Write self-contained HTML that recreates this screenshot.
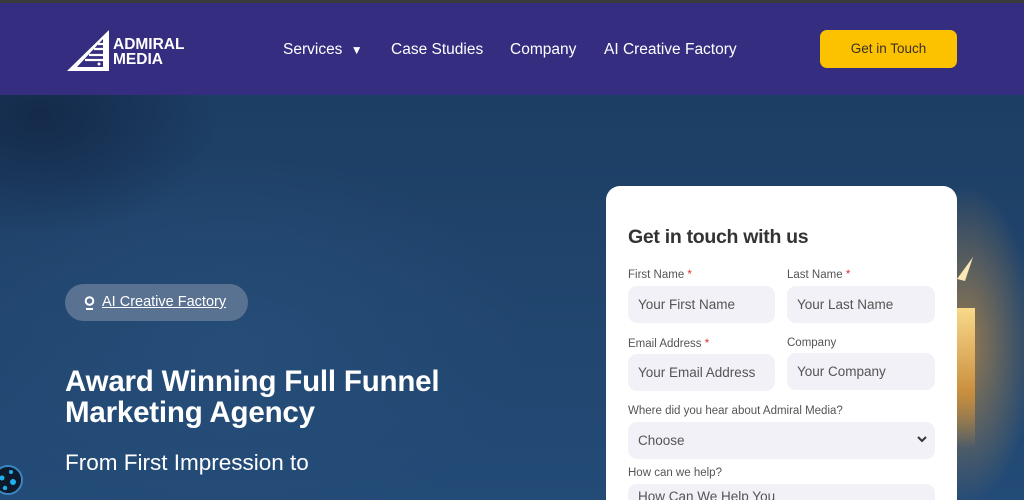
<!DOCTYPE html>
<html style="width:1024px;height:500px;overflow:hidden"><head><meta charset="utf-8"><style>
*{margin:0;padding:0;box-sizing:border-box}
body{width:1024px;height:500px;overflow:hidden;font-family:"Liberation Sans",sans-serif;background:#1f436b;position:relative}
.top{position:absolute;left:0;top:0;width:1024px;height:3px;background:#3a3a3a}
.nav{position:absolute;left:0;top:3px;width:1024px;height:92px;background:#342d80}
.hero{position:absolute;left:0;top:95px;width:1024px;height:405px;background:
radial-gradient(ellipse 180px 120px at 40px 20px,#142a4a 0%,rgba(20,42,74,0) 100%),
radial-gradient(ellipse 300px 200px at 230px 260px,#264d78 0%,rgba(38,77,120,0) 100%),
radial-gradient(ellipse 70px 160px at 965px 250px,rgba(190,140,70,.75) 0%,rgba(190,140,70,0) 100%),
linear-gradient(180deg,#1d3e64 0%,#21466f 60%,#234b77 100%)}
.navlink{position:absolute;top:38px;color:#fff;font-size:15.5px}
.btn{position:absolute;left:820px;top:27px;width:137px;height:38px;background:#fcc200;border-radius:7px;color:#3a2f2a;font-size:13.5px;text-align:center;line-height:38px}
.pill{position:absolute;left:65px;top:284px;width:183px;height:37px;border-radius:19px;background:#5a7291;color:#fff;font-size:14.5px;line-height:37px;padding-left:37px;text-decoration:underline}
h1{position:absolute;left:65px;top:366px;color:#fff;font-size:29.5px;line-height:31px;font-weight:bold;letter-spacing:-.2px}
.sub{position:absolute;left:65px;top:450px;color:#fff;font-size:22.5px}
.card{position:absolute;left:606px;top:186px;width:351px;height:314px;background:#fff;border-radius:14px 14px 0 0;overflow:hidden}
.card h2{position:absolute;left:22px;top:40px;font-size:19.5px;color:#333;font-weight:bold;letter-spacing:-.3px}
.lbl{position:absolute;font-size:11.5px;color:#555}
.lbl b{color:#d33;font-weight:normal}
.in{position:absolute;background:#f1f1f7;border-radius:9px;height:37px;font-size:13.5px;color:#555;line-height:37px;padding-left:10px}
.glow{position:absolute;left:957px;top:308px;width:18px;height:140px;background:linear-gradient(180deg,#f9d98a,#c98f3e 60%,rgba(150,110,70,0))}
</style></head><body>
<div class="top"></div>
<div class="nav">
<svg style="position:absolute;left:65px;top:24px" width="45" height="46" viewBox="0 0 45 46"><path d="M44 3 L44 44 L2 44 Z" fill="#fff"/><path d="M38 12 L38 40 L12 40 Z" fill="#342d80"/><path d="M20 33h18M24 28h14M29 22h9M33 17h5" stroke="#fff" stroke-width="2.2"/><circle cx="34" cy="37" r="1.5" fill="#fff"/></svg>
<div style="position:absolute;left:113px;top:34px;color:#fff;font-weight:bold;font-size:15.5px;line-height:15px">ADMIRAL<br>MEDIA</div>
<div class="navlink" style="left:283px">Services <span style="font-size:12px;margin-left:4px">▼</span></div>
<div class="navlink" style="left:391px">Case Studies</div>
<div class="navlink" style="left:510px">Company</div>
<div class="navlink" style="left:604px">AI Creative Factory</div>
<div class="btn">Get in Touch</div>
</div>
<div class="hero"></div>
<div class="glow"></div>
<svg style="position:absolute;left:955px;top:255px" width="20" height="30"><path d="M2 24 L18 2 L10 26 Z" fill="#fbe8b5"/></svg>
<div class="pill"><svg style="position:absolute;left:19px;top:12px" width="11" height="14"><circle cx="5.5" cy="5" r="3.8" fill="none" stroke="#fff" stroke-width="2"/><path d="M2 13h7" stroke="#fff" stroke-width="2"/></svg>AI Creative Factory</div>
<h1>Award Winning Full Funnel<br>Marketing Agency</h1>
<div class="sub">From First Impression to</div>
<svg style="position:absolute;left:-2px;top:462px" width="28" height="36"><circle cx="10" cy="18" r="14" fill="#0d1a2c" stroke="#3a86c0" stroke-width="2"/><circle cx="4" cy="16" r="2.5" fill="#1fb0f0"/><circle cx="13" cy="10" r="2" fill="#1fb0f0"/><circle cx="15" cy="20" r="3" fill="#1fb0f0"/><circle cx="7" cy="26" r="2.2" fill="#1fb0f0"/></svg>
<div class="card">
<h2>Get in touch with us</h2>
<div class="lbl" style="left:22px;top:83px">First Name <b>*</b></div>
<div class="lbl" style="left:181px;top:83px">Last Name <b>*</b></div>
<div class="in" style="left:22px;top:100px;width:147px">Your First Name</div>
<div class="in" style="left:181px;top:100px;width:148px">Your Last Name</div>
<div class="lbl" style="left:22px;top:152px">Email Address <b>*</b></div>
<div class="lbl" style="left:181px;top:151px">Company</div>
<div class="in" style="left:22px;top:168px;width:147px">Your Email Address</div>
<div class="in" style="left:181px;top:167px;width:148px">Your Company</div>
<div class="lbl" style="left:22px;top:219px">Where did you hear about Admiral Media?</div>
<div class="in" style="left:22px;top:236px;width:307px">Choose<svg style="position:absolute;right:8px;top:14px" width="10" height="8"><path d="M1 1l4 4 4-4" stroke="#333" stroke-width="2" fill="none"/></svg></div>
<div class="lbl" style="left:22px;top:281px">How can we help?</div>
<div class="in" style="left:22px;top:298px;width:307px;line-height:26px">How Can We Help You</div>
</div>
</body></html>
